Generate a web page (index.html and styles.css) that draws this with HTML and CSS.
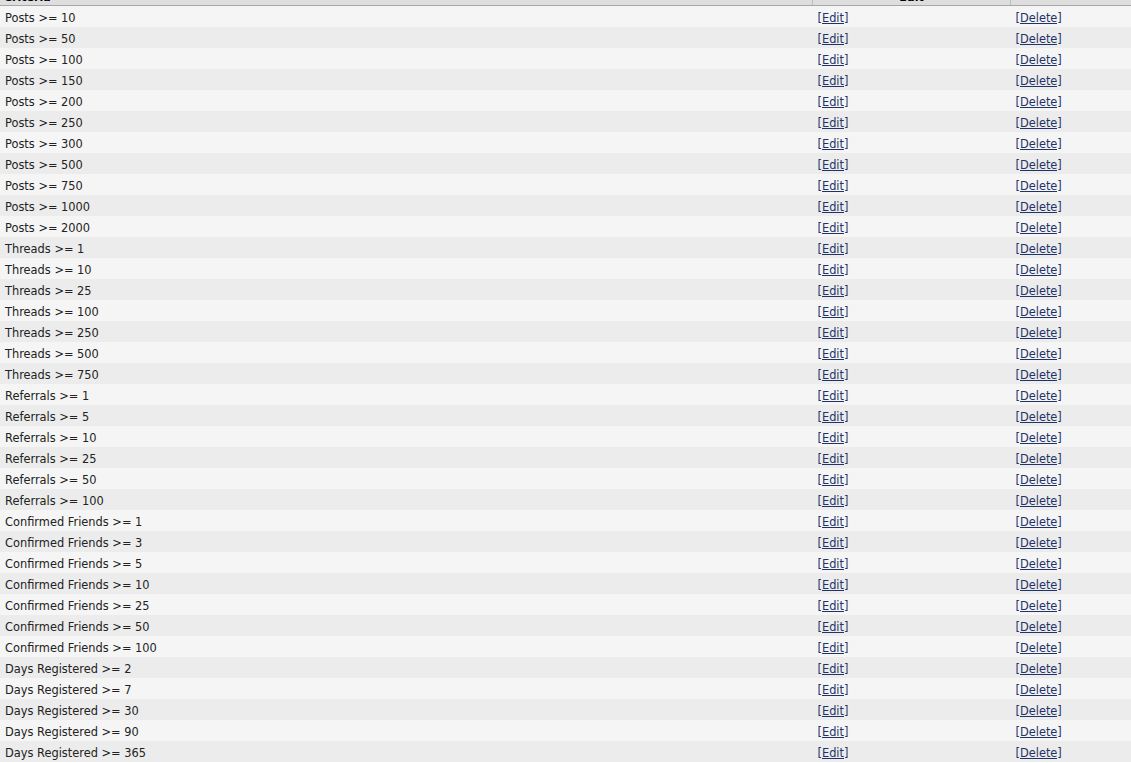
FILE: index.html
```html
<!DOCTYPE html>
<html>
<head>
<meta charset="utf-8">
<link rel="stylesheet" href="styles.css">
</head>
<body>
<div class="wrap">
<table class="grid">
<thead>
<tr><th class="c1">Criteria</th><th class="c2">Edit</th><th class="c3"></th></tr>
</thead>
<tbody id="rows">
<tr><td>Posts &gt;= 10</td><td><a href="#">[Edit]</a></td><td><a href="#">[Delete]</a></td></tr>
<tr><td>Posts &gt;= 50</td><td><a href="#">[Edit]</a></td><td><a href="#">[Delete]</a></td></tr>
<tr><td>Posts &gt;= 100</td><td><a href="#">[Edit]</a></td><td><a href="#">[Delete]</a></td></tr>
<tr><td>Posts &gt;= 150</td><td><a href="#">[Edit]</a></td><td><a href="#">[Delete]</a></td></tr>
<tr><td>Posts &gt;= 200</td><td><a href="#">[Edit]</a></td><td><a href="#">[Delete]</a></td></tr>
<tr><td>Posts &gt;= 250</td><td><a href="#">[Edit]</a></td><td><a href="#">[Delete]</a></td></tr>
<tr><td>Posts &gt;= 300</td><td><a href="#">[Edit]</a></td><td><a href="#">[Delete]</a></td></tr>
<tr><td>Posts &gt;= 500</td><td><a href="#">[Edit]</a></td><td><a href="#">[Delete]</a></td></tr>
<tr><td>Posts &gt;= 750</td><td><a href="#">[Edit]</a></td><td><a href="#">[Delete]</a></td></tr>
<tr><td>Posts &gt;= 1000</td><td><a href="#">[Edit]</a></td><td><a href="#">[Delete]</a></td></tr>
<tr><td>Posts &gt;= 2000</td><td><a href="#">[Edit]</a></td><td><a href="#">[Delete]</a></td></tr>
<tr><td>Threads &gt;= 1</td><td><a href="#">[Edit]</a></td><td><a href="#">[Delete]</a></td></tr>
<tr><td>Threads &gt;= 10</td><td><a href="#">[Edit]</a></td><td><a href="#">[Delete]</a></td></tr>
<tr><td>Threads &gt;= 25</td><td><a href="#">[Edit]</a></td><td><a href="#">[Delete]</a></td></tr>
<tr><td>Threads &gt;= 100</td><td><a href="#">[Edit]</a></td><td><a href="#">[Delete]</a></td></tr>
<tr><td>Threads &gt;= 250</td><td><a href="#">[Edit]</a></td><td><a href="#">[Delete]</a></td></tr>
<tr><td>Threads &gt;= 500</td><td><a href="#">[Edit]</a></td><td><a href="#">[Delete]</a></td></tr>
<tr><td>Threads &gt;= 750</td><td><a href="#">[Edit]</a></td><td><a href="#">[Delete]</a></td></tr>
<tr><td>Referrals &gt;= 1</td><td><a href="#">[Edit]</a></td><td><a href="#">[Delete]</a></td></tr>
<tr><td>Referrals &gt;= 5</td><td><a href="#">[Edit]</a></td><td><a href="#">[Delete]</a></td></tr>
<tr><td>Referrals &gt;= 10</td><td><a href="#">[Edit]</a></td><td><a href="#">[Delete]</a></td></tr>
<tr><td>Referrals &gt;= 25</td><td><a href="#">[Edit]</a></td><td><a href="#">[Delete]</a></td></tr>
<tr><td>Referrals &gt;= 50</td><td><a href="#">[Edit]</a></td><td><a href="#">[Delete]</a></td></tr>
<tr><td>Referrals &gt;= 100</td><td><a href="#">[Edit]</a></td><td><a href="#">[Delete]</a></td></tr>
<tr><td>Confirmed Friends &gt;= 1</td><td><a href="#">[Edit]</a></td><td><a href="#">[Delete]</a></td></tr>
<tr><td>Confirmed Friends &gt;= 3</td><td><a href="#">[Edit]</a></td><td><a href="#">[Delete]</a></td></tr>
<tr><td>Confirmed Friends &gt;= 5</td><td><a href="#">[Edit]</a></td><td><a href="#">[Delete]</a></td></tr>
<tr><td>Confirmed Friends &gt;= 10</td><td><a href="#">[Edit]</a></td><td><a href="#">[Delete]</a></td></tr>
<tr><td>Confirmed Friends &gt;= 25</td><td><a href="#">[Edit]</a></td><td><a href="#">[Delete]</a></td></tr>
<tr><td>Confirmed Friends &gt;= 50</td><td><a href="#">[Edit]</a></td><td><a href="#">[Delete]</a></td></tr>
<tr><td>Confirmed Friends &gt;= 100</td><td><a href="#">[Edit]</a></td><td><a href="#">[Delete]</a></td></tr>
<tr><td>Days Registered &gt;= 2</td><td><a href="#">[Edit]</a></td><td><a href="#">[Delete]</a></td></tr>
<tr><td>Days Registered &gt;= 7</td><td><a href="#">[Edit]</a></td><td><a href="#">[Delete]</a></td></tr>
<tr><td>Days Registered &gt;= 30</td><td><a href="#">[Edit]</a></td><td><a href="#">[Delete]</a></td></tr>
<tr><td>Days Registered &gt;= 90</td><td><a href="#">[Edit]</a></td><td><a href="#">[Delete]</a></td></tr>
<tr><td>Days Registered &gt;= 365</td><td><a href="#">[Edit]</a></td><td><a href="#">[Delete]</a></td></tr>
</tbody>
</table>
</div>
</body>
</html>
```

FILE: styles.css
```css
html, body {
  margin: 0;
  padding: 0;
  background: #ffffff;
  overflow: hidden;
}

.wrap {
  margin-top: -11px;
}

.grid {
  width: 1131px;
  border-collapse: collapse;
  table-layout: fixed;
  font-family: "DejaVu Sans", Verdana, sans-serif;
  font-size: 11.4px;
  color: #222222;
}

.grid th {
  height: 16px;
  padding: 0 4px;
  background: #dedede;
  border-bottom: 1px solid #a8a8a8;
  border-left: 1px solid #bdbdbd;
  font-weight: bold;
  color: #000;
  font-size: 11px;
  line-height: 13px;
}

.grid th.c1 {
  width: 804px;
  text-align: left;
  border-left: none;
}

.grid th.c2 {
  width: 189px;
  text-align: center;
}

.grid th.c3 {
  text-align: left;
}

.grid td {
  height: 18px;
  padding: 3px 4px 0 5px;
  vertical-align: middle;
  line-height: 18px;
  white-space: nowrap;
}

.grid tbody tr:nth-child(odd) td {
  background: #f5f5f5;
}

.grid tbody tr:nth-child(even) td {
  background: #ececec;
}

.grid a {
  color: #1f3368;
  text-decoration: underline;
}
```
